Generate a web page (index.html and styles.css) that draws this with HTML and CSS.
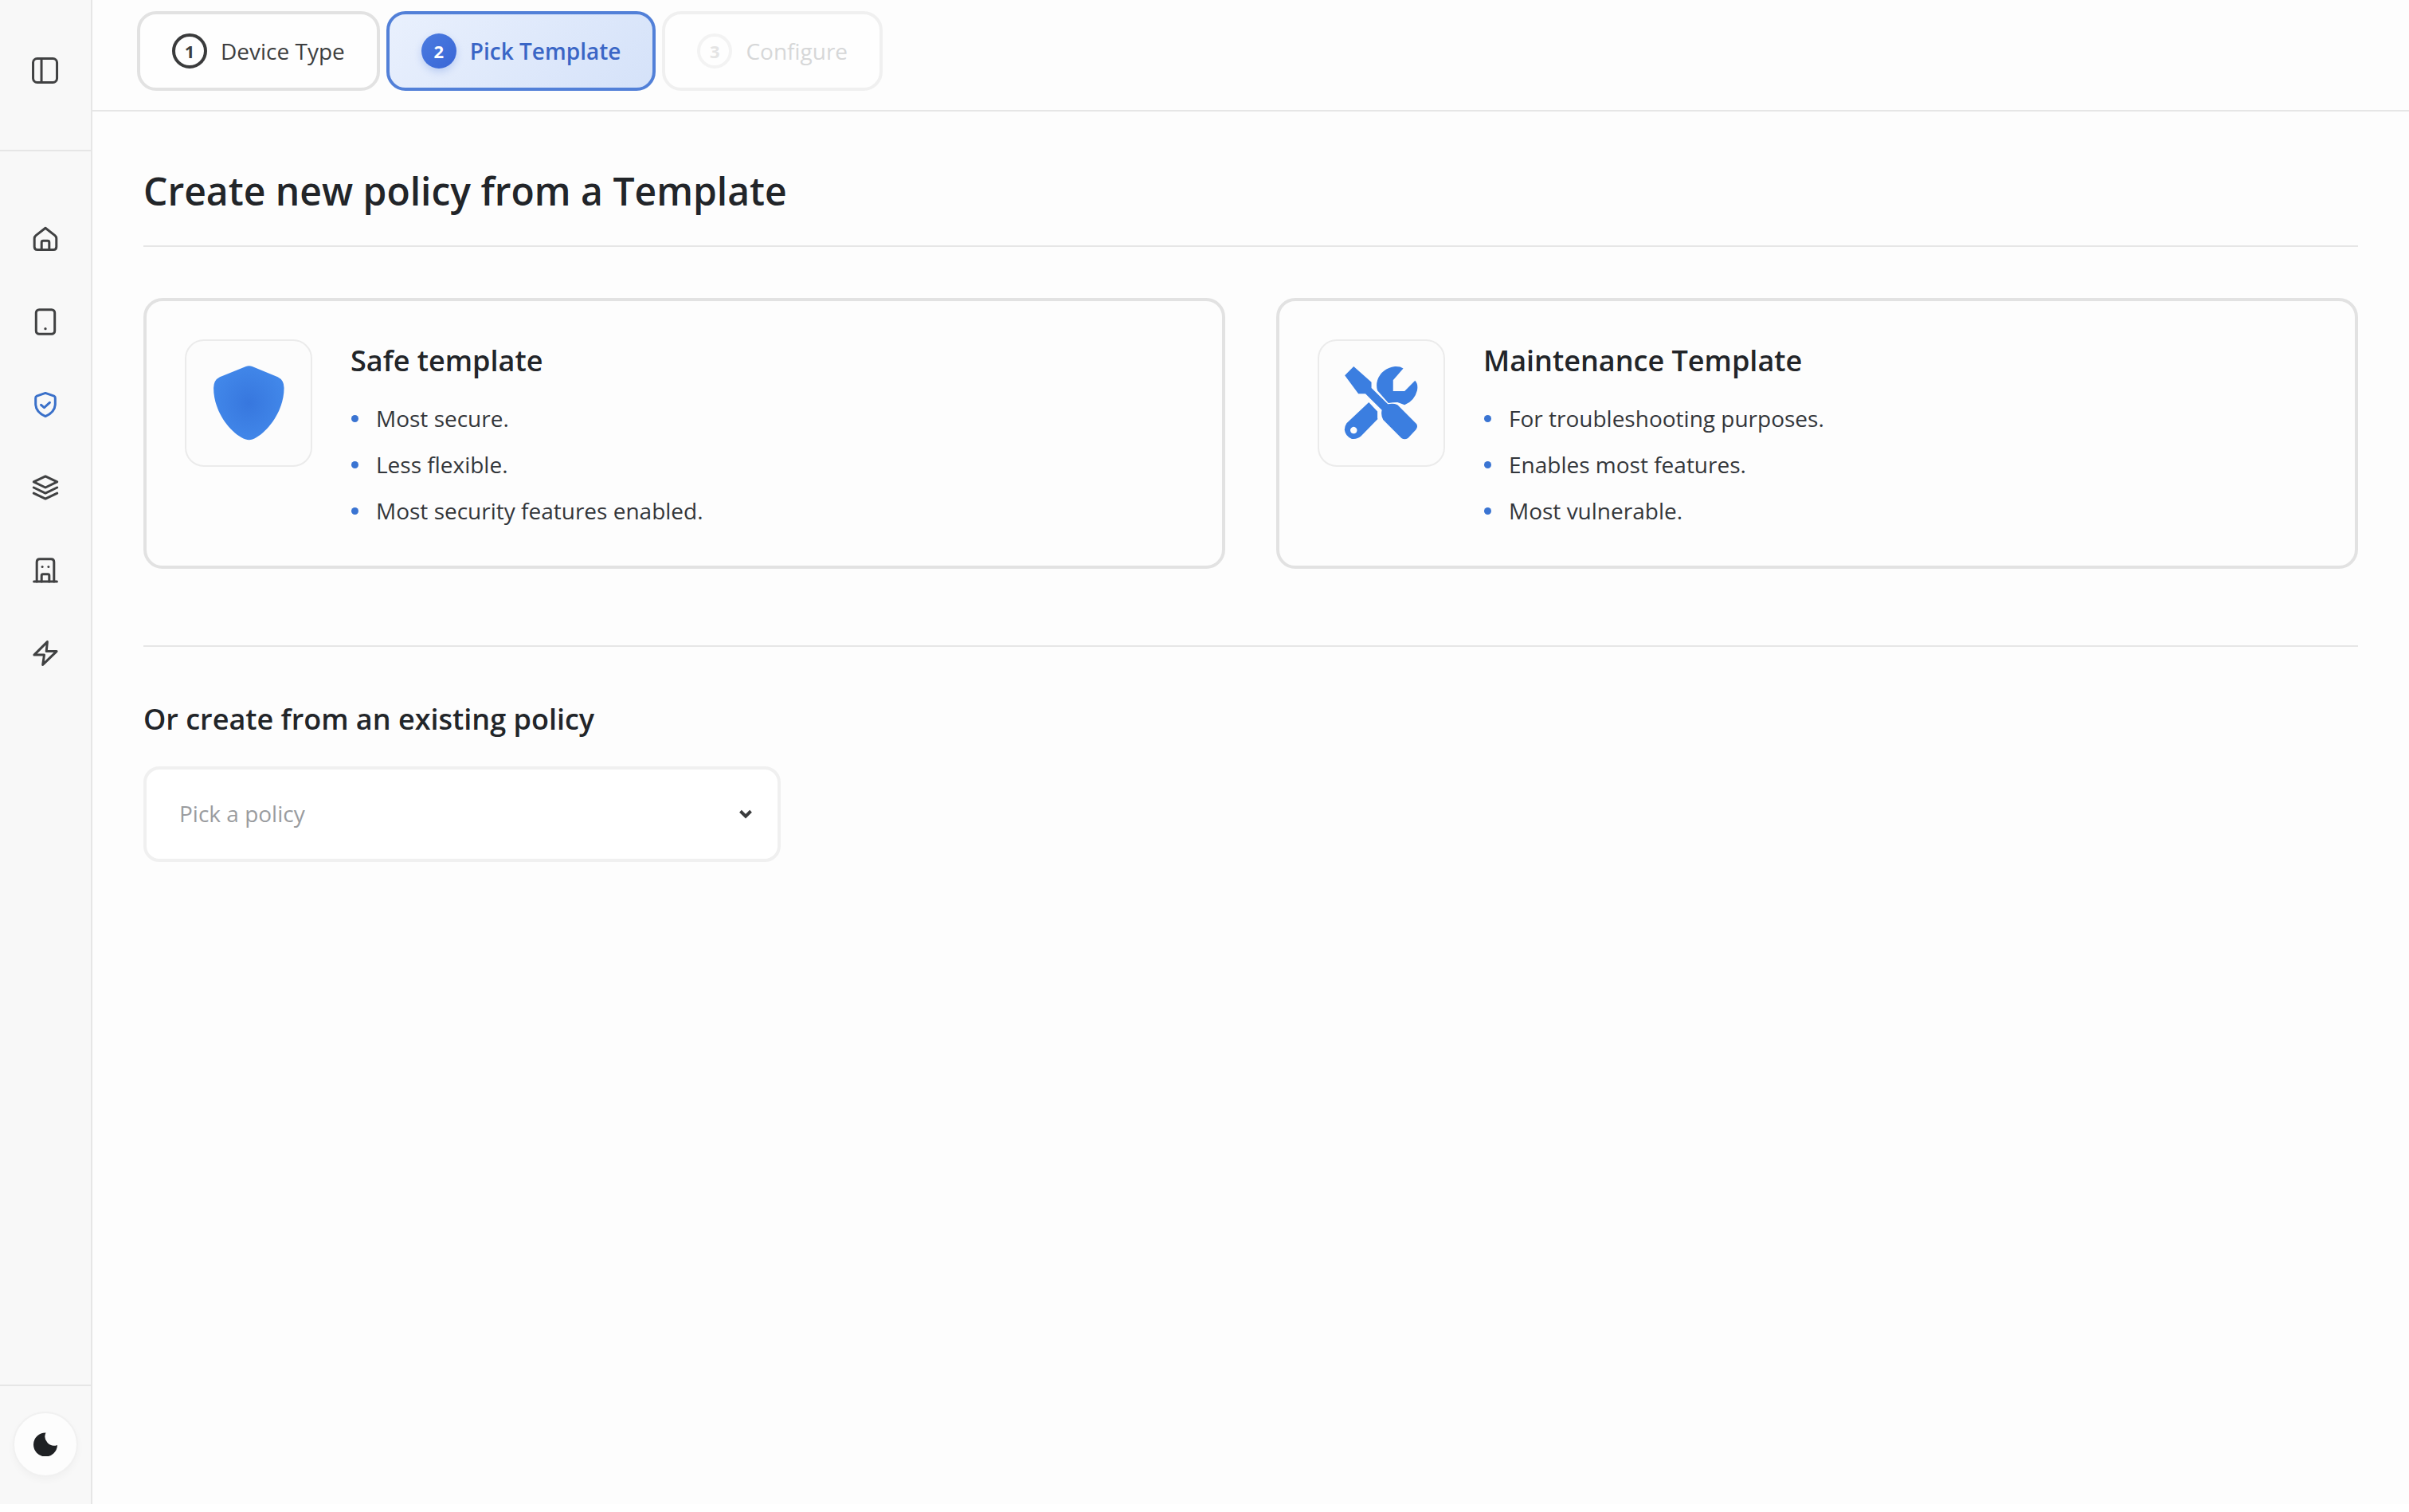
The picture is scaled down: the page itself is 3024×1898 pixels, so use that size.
FILE: index.html
```html
<!DOCTYPE html>
<html lang="en">
<head>
<meta charset="utf-8">
<title>Create new policy</title>
<link rel="stylesheet" href="styles.css">
</head>
<body>
<div class="app">
  <aside class="sidebar">
    <div class="side-top">
      <svg class="icon" viewBox="0 0 24 24"><rect x="1.700" y="2.300" width="20" height="20" rx="3.400"/><path d="M8.700 2.300v20"/></svg>
    </div>
    <nav class="side-nav">
      <svg class="icon" viewBox="0 0 24 24"><path d="M12 2.800l8 6.300q1.200 1 1.200 2.400v7q0 2.500-2.500 2.500H5.300q-2.500 0-2.500-2.500v-7q0-1.400 1.200-2.400z"/><path d="M8.800 21v-6.200q0-1.300 1.300-1.300h3.800q1.300 0 1.300 1.300V21"/></svg>
      <svg class="icon" viewBox="0 0 24 24"><rect x="4.200" y="1.800" width="15.600" height="20.400" rx="2.600"/><circle class="dot" cx="12" cy="17.800" r="1.100"/></svg>
      <svg class="icon icon-active" viewBox="0 0 24 24"><path d="M12 2.300l7.200 2.500q1 .4 1 1.500v5c0 4.800-3.500 8.400-8.200 10.400-4.700-2-8.200-5.600-8.200-10.400v-5q0-1.100 1-1.500z"/><path d="M8.400 12.200l2.600 2.300 4.600-4.300"/></svg>
      <svg class="icon" viewBox="0 0 24 24"><path d="M12 2.600l9.800 4.700-9.800 4.700-9.800-4.700z"/><path d="M2.200 12l9.800 4.700 9.800-4.700"/><path d="M2.200 16.700l9.800 4.700 9.800-4.700"/></svg>
      <svg class="icon" viewBox="0 0 24 24"><path d="M2.400 21.400h19.200"/><path d="M4.800 21.400V5q0-2.500 2.500-2.500h9.400q2.500 0 2.500 2.500v16.400"/><path d="M8.800 21.400v-5q0-1.200 1.200-1.200h4q1.200 0 1.200 1.200v5"/><circle class="dot" cx="9.400" cy="9" r="1"/><circle class="dot" cx="14.600" cy="9" r="1"/></svg>
      <svg class="icon" viewBox="0 0 24 24"><path d="M13.600 2.400L2.600 13.400H11l-1.200 8.200 11.600-11.200h-8.600z"/></svg>
    </nav>
    <div class="side-bottom">
      <button class="theme-btn" type="button" aria-label="Toggle theme">
        <svg class="moon" viewBox="0 0 30 30"><path d="M15.500.5A15 15 0 1 0 30 16 11.500 11.500 0 0 1 15.500.5z"/></svg>
      </button>
    </div>
  </aside>

  <main class="main">
    <header class="stepper">
      <div class="step"><span class="step-num">1</span><span>Device Type</span></div>
      <div class="step step-current"><span class="step-num">2</span><span>Pick Template</span></div>
      <div class="step step-disabled"><span class="step-num">3</span><span>Configure</span></div>
    </header>

    <section class="content">
      <h1 class="page-title">Create new policy from a Template</h1>

      <div class="cards">
        <article class="card">
          <div class="card-icon">
            <svg viewBox="22 20 476 476">
              <defs>
                <radialGradient id="shieldFill" cx="50%" cy="50%" r="55%">
                  <stop offset="0" stop-color="#3777de"/>
                  <stop offset="1" stop-color="#4288ea"/>
                </radialGradient>
              </defs>
              <path fill="url(#shieldFill)" d="M250 118Q262 112 274 118L372 158Q396 170 396 200C396 290 330 375 275 397Q262 402 249 397C190 375 126 290 126 200Q126 170 150 158Z"/>
            </svg>
          </div>
          <div class="card-body">
            <h2 class="card-title">Safe template</h2>
            <ul class="card-list">
              <li>Most secure.</li>
              <li>Less flexible.</li>
              <li>Most security features enabled.</li>
            </ul>
          </div>
        </article>

        <article class="card">
          <div class="card-icon">
            <svg viewBox="45 20 476 476">
              <g fill="#3b7ee0">
                <path d="M177 118L245 178V200L308 262Q330 258 345 265L418 338Q424 350 415 360L385 392Q372 400 360 392L290 322Q280 305 285 285L222 222H195L143 152Z"/>
                <path d="M367 125L328 170V212H372L412 172Q425 185 420 210Q410 250 372 265L345 255Q325 255 310 258L268 210Q262 190 268 170Q285 125 335 118Q355 117 367 125Z"/>
                <path fill-rule="evenodd" d="M235 255L268 290V315Q270 320 266 322L205 385Q190 398 170 395Q145 385 142 360Q143 345 150 335ZM177 349a13 13 0 1 0 .01 0Z"/>
              </g>
            </svg>
          </div>
          <div class="card-body">
            <h2 class="card-title">Maintenance Template</h2>
            <ul class="card-list">
              <li>For troubleshooting purposes.</li>
              <li>Enables most features.</li>
              <li>Most vulnerable.</li>
            </ul>
          </div>
        </article>
      </div>

      <div class="or-block">
        <h3 class="or-title">Or create from an existing policy</h3>
        <div class="select">
          <span>Pick a policy</span>
          <svg class="chevron" viewBox="0 0 16 12"><path d="M2 3l6 6 6-6"/></svg>
        </div>
      </div>
    </section>
  </main>
</div>
</body>
</html>
```

FILE: styles.css
```css
* { box-sizing: border-box; }

html, body {
  margin: 0;
  background: #ffffff;
}

body {
  font-family: "Open Sans", "Noto Sans", sans-serif;
  color: #222529;
}

.app {
  display: flex;
  height: 1888px;
  background: #fdfdfd;
}

.sidebar {
  width: 116px;
  flex: none;
  display: flex;
  flex-direction: column;
  background: #f8f8f8;
  border-right: 2px solid #e6e6e6;
}

.side-top {
  height: 190px;
  flex: none;
  display: flex;
  justify-content: center;
  padding-top: 70px;
  border-bottom: 2px solid #e6e6e6;
}

.icon {
  width: 36px;
  height: 36px;
  flex: none;
  fill: none;
  stroke: #404142;
  stroke-width: 2;
  stroke-linecap: round;
  stroke-linejoin: round;
}

.icon .dot {
  fill: #404142;
  stroke: none;
}

.icon-active {
  stroke: #3a70c9;
}

.side-nav {
  flex: 1;
  display: flex;
  flex-direction: column;
  align-items: center;
  gap: 68px;
  padding-top: 92px;
}

.side-bottom {
  flex: none;
  height: 150px;
  display: flex;
  justify-content: center;
  padding-top: 32px;
  border-top: 2px solid #e6e6e6;
}

.theme-btn {
  width: 82px;
  height: 82px;
  padding: 0;
  display: flex;
  align-items: center;
  justify-content: center;
  background: #fdfdfd;
  border: 2px solid #f1f1f1;
  border-radius: 50%;
  box-shadow: 0 4px 10px rgba(0, 0, 0, 0.03);
}

.moon {
  width: 30px;
  height: 30px;
  fill: #1f2124;
}

.main {
  flex: 1;
  min-width: 0;
  display: flex;
  flex-direction: column;
}

.stepper {
  height: 140px;
  flex: none;
  display: flex;
  gap: 8px;
  padding: 14px 0 0 56px;
  border-bottom: 2px solid #e6e6e6;
}

.step {
  height: 100px;
  display: flex;
  align-items: center;
  gap: 17px;
  padding: 0 40px;
  background: #fefefe;
  border: 4px solid #e2e2e2;
  border-radius: 24px;
  font-size: 28px;
  font-weight: 500;
  color: #3d3e40;
}

.step-num {
  width: 44px;
  height: 44px;
  display: flex;
  align-items: center;
  justify-content: center;
  border: 4px solid #3a3b3c;
  border-radius: 50%;
  font-size: 22px;
  font-weight: 700;
}

.step-current {
  background: linear-gradient(135deg, #e9f0fd 0%, #d5e2f9 100%);
  border-color: #5280d8;
  color: #3a66c6;
  font-weight: 600;
}

.step-current .step-num {
  background: linear-gradient(135deg, #4a7be0 0%, #3a66d6 100%);
  border-color: transparent;
  background-origin: border-box;
  color: #ffffff;
  box-shadow: 0 4px 10px rgba(63, 111, 219, 0.25);
}

.step-disabled {
  border-color: #f0f0f0;
  color: #d6d7d8;
}

.step-disabled .step-num {
  border-color: #f3f3f3;
  color: #e4e4e4;
}

.content {
  padding: 64px 64px 0;
}

.page-title {
  margin: 0 0 64px;
  padding-bottom: 32px;
  font-size: 48px;
  line-height: 72px;
  font-weight: 600;
  border-bottom: 2px solid #e6e6e6;
}

.cards {
  display: grid;
  grid-template-columns: 1fr 1fr;
  gap: 64px;
}

.card {
  display: flex;
  gap: 48px;
  height: 340px;
  padding: 48px;
  border: 4px solid #e2e2e2;
  border-radius: 24px;
  background: #fdfdfd;
}

.card-icon {
  width: 160px;
  height: 160px;
  flex: none;
  border: 2px solid #ebebeb;
  border-radius: 24px;
  background: #fcfcfc;
}

.card-icon svg {
  display: block;
  width: 100%;
  height: 100%;
}

.card-body {
  min-width: 0;
}

.card-title {
  margin: 0 0 25px;
  font-size: 36px;
  line-height: 54px;
  font-weight: 600;
}

.card-list {
  margin: 0;
  padding: 0;
  list-style: none;
  display: flex;
  flex-direction: column;
  gap: 18px;
}

.card-list li {
  display: flex;
  align-items: center;
  gap: 22px;
  height: 40px;
  font-size: 28px;
  color: #33363a;
}

.card-list li::before {
  content: "";
  width: 9px;
  height: 9px;
  flex: none;
  margin-left: 1px;
  border-radius: 50%;
  background: #3a74d2;
}

.or-block {
  margin-top: 96px;
  padding-top: 60px;
  border-top: 2px solid #e6e6e6;
}

.or-title {
  margin: 0 0 28px;
  font-size: 36px;
  line-height: 62px;
  font-weight: 600;
}

.select {
  width: 800px;
  height: 120px;
  display: flex;
  align-items: center;
  justify-content: space-between;
  padding: 0 31px 2px 41px;
  background: #ffffff;
  border: 4px solid #f0f0f0;
  border-radius: 20px;
  font-size: 28px;
  color: #9a9c9f;
}

.chevron {
  width: 18px;
  height: 13px;
  fill: none;
  stroke: #3a3b3d;
  stroke-width: 3.600;
}
```
